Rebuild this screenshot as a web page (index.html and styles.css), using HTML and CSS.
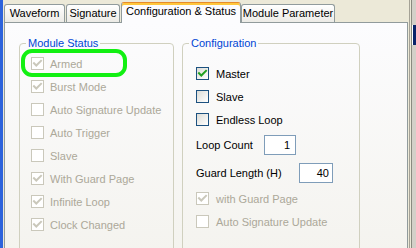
FILE: index.html
```html
<!DOCTYPE html>
<html>
<head>
<meta charset="utf-8">
<link rel="stylesheet" href="styles.css">
</head>
<body>
<div class="app">
  <div class="edge-left"></div>
  <div class="dialog">
    <div class="tabs">
      <div class="tab t-wave">Waveform</div>
      <div class="tab t-sig">Signature</div>
      <div class="tab active t-conf">Configuration &amp; Status</div>
      <div class="tab t-mod">Module Parameter</div>
    </div>
    <div class="panel">
      <fieldset class="group status">
        <legend>Module Status</legend>
        <div class="highlight"></div>
        <div class="body">
          <div class="row disabled"><span class="cb checked"><svg viewBox="0 0 11 11"><path d="M2 5.2 L4.3 7.5 L9 2.8"/></svg></span><span class="lbl">Armed</span></div>
          <div class="row disabled"><span class="cb checked"><svg viewBox="0 0 11 11"><path d="M2 5.2 L4.3 7.5 L9 2.8"/></svg></span><span class="lbl">Burst Mode</span></div>
          <div class="row disabled"><span class="cb"></span><span class="lbl">Auto Signature Update</span></div>
          <div class="row disabled"><span class="cb"></span><span class="lbl">Auto Trigger</span></div>
          <div class="row disabled"><span class="cb"></span><span class="lbl">Slave</span></div>
          <div class="row disabled"><span class="cb checked"><svg viewBox="0 0 11 11"><path d="M2 5.2 L4.3 7.5 L9 2.8"/></svg></span><span class="lbl">With Guard Page</span></div>
          <div class="row disabled"><span class="cb checked"><svg viewBox="0 0 11 11"><path d="M2 5.2 L4.3 7.5 L9 2.8"/></svg></span><span class="lbl">Infinite Loop</span></div>
          <div class="row disabled"><span class="cb checked"><svg viewBox="0 0 11 11"><path d="M2 5.2 L4.3 7.5 L9 2.8"/></svg></span><span class="lbl">Clock Changed</span></div>
        </div>
      </fieldset>
      <fieldset class="group config">
        <legend>Configuration</legend>
        <div class="body">
          <div class="row enabled"><span class="cb checked"><svg viewBox="0 0 11 11"><path d="M2 5.2 L4.3 7.5 L9 2.8"/></svg></span><span class="lbl">Master</span></div>
          <div class="row enabled"><span class="cb"></span><span class="lbl">Slave</span></div>
          <div class="row enabled"><span class="cb"></span><span class="lbl">Endless Loop</span></div>
          <div class="field loop"><span class="flbl">Loop Count</span><span class="input">1</span></div>
          <div class="field guard"><span class="flbl">Guard Length (H)</span><span class="input">40</span></div>
          <div class="row disabled after-field"><span class="cb checked"><svg viewBox="0 0 11 11"><path d="M2 5.2 L4.3 7.5 L9 2.8"/></svg></span><span class="lbl">with Guard Page</span></div>
          <div class="row disabled"><span class="cb"></span><span class="lbl">Auto Signature Update</span></div>
        </div>
      </fieldset>
    </div>
  </div>
  <div class="edge-right"><div class="bg-window"></div></div>
</div>
</body>
</html>
```

FILE: styles.css
```css
* { box-sizing: border-box; }
html, body { margin: 0; padding: 0; }
body {
  width: 416px;
  height: 248px;
  overflow: hidden;
  background: #ECE9D8;
  font-family: "Liberation Sans", Arial, sans-serif;
  font-size: 11px;
  color: #000;
}
.app {
  display: flex;
  width: 416px;
  height: 248px;
  overflow: hidden;
}
.edge-left {
  width: 3px;
  flex: none;
  background: #2D63DC;
}
.dialog {
  width: 405px;
  flex: none;
  padding-left: 1px;
  display: flex;
  flex-direction: column;
}
.tabs {
  display: flex;
  align-items: flex-start;
  height: 22px;
  position: relative;
  z-index: 2;
}
.tab {
  margin-top: 4px;
  height: 18px;
  border: 1px solid #919B9C;
  border-bottom: none;
  border-radius: 3px 3px 0 0;
  background: linear-gradient(#FFFFFF, #ECEBE6);
  line-height: 17px;
  text-align: center;
  white-space: nowrap;
}
.t-wave { width: 61px; }
.t-sig { width: 54px; margin-left: 1px; }
.t-conf { width: 120px; margin-left: 1px; }
.t-mod { width: 94px; }
.tab.active {
  margin-top: 2px;
  height: 21px;
  border-top: 1px solid #E68B2C;
  box-shadow: inset 0 2px 0 #FFC73C;
  background: #FCFCFE;
  padding-top: 2px;
  line-height: 13px;
}
.panel {
  height: 240px;
  border: 1px solid #919B9C;
  border-bottom: none;
  background: linear-gradient(#FCFCFE, #F4F3EE);
  padding: 14px 0 0 14px;
  display: flex;
  gap: 8px;
  align-items: flex-start;
}
.group {
  margin: 0;
  padding: 0;
  border: 1px solid #D0D0BF;
  border-radius: 4px;
  height: 230px;
  position: relative;
}
.group legend {
  margin-left: 6px;
  padding: 0 2px;
  color: #0046D5;
  line-height: 13px;
}
.status { width: 155px; }
.config { width: 178px; }
.status .body { padding: 2px 0 0 11px; }
.config .body { padding: 12px 0 0 13px; }
.row {
  display: flex;
  align-items: center;
  height: 23px;
}
.status .lbl { margin-left: 6px; }
.config .lbl { margin-left: 7px; }
.cb {
  width: 13px;
  height: 13px;
  flex: none;
  display: flex;
  align-items: center;
  justify-content: center;
}
.cb svg { width: 11px; height: 11px; }
.cb path { fill: none; stroke-width: 2; stroke-linecap: square; }
.enabled .cb {
  border: 1px solid #1C5180;
  background: linear-gradient(135deg, #DCDCD7, #FFFFFF);
}
.enabled .cb path { stroke: #21A121; }
.disabled .cb {
  border: 1px solid #CAC8BB;
  background: #FFFFFF;
}
.disabled .cb path { stroke: #CAC8BB; }
.disabled .lbl { color: #ACA899; }
.field {
  display: flex;
  align-items: center;
  height: 20px;
}
.loop { margin-top: 4px; }
.guard { margin-top: 8px; }
.after-field { margin-top: 4px; }
.loop .flbl { width: 68px; }
.guard .flbl { width: 103px; }
.input {
  height: 20px;
  border: 1px solid #7F9DB9;
  background: #FFFFFF;
  text-align: right;
  line-height: 18px;
}
.loop .input { width: 32px; padding-right: 5px; }
.guard .input { width: 34px; padding-right: 3px; }
.highlight {
  position: absolute;
  left: 1px;
  top: -1px;
  width: 106px;
  height: 28px;
  border: 4px solid #12F012;
  border-radius: 11px;
  z-index: 1;
}
.edge-right {
  width: 8px;
  flex: none;
  background: linear-gradient(to right, #ECE9D8 0 1px, #A5A296 1px 2px, #ECE9D8 2px 3px, #8A8A80 3px 4px, #D4D0C8 4px);
}
.bg-window {
  margin: 25px 0 0 4px;
  height: 20px;
  background: #0A246A;
  border-left: 1px solid #FFFFFF;
}
```
